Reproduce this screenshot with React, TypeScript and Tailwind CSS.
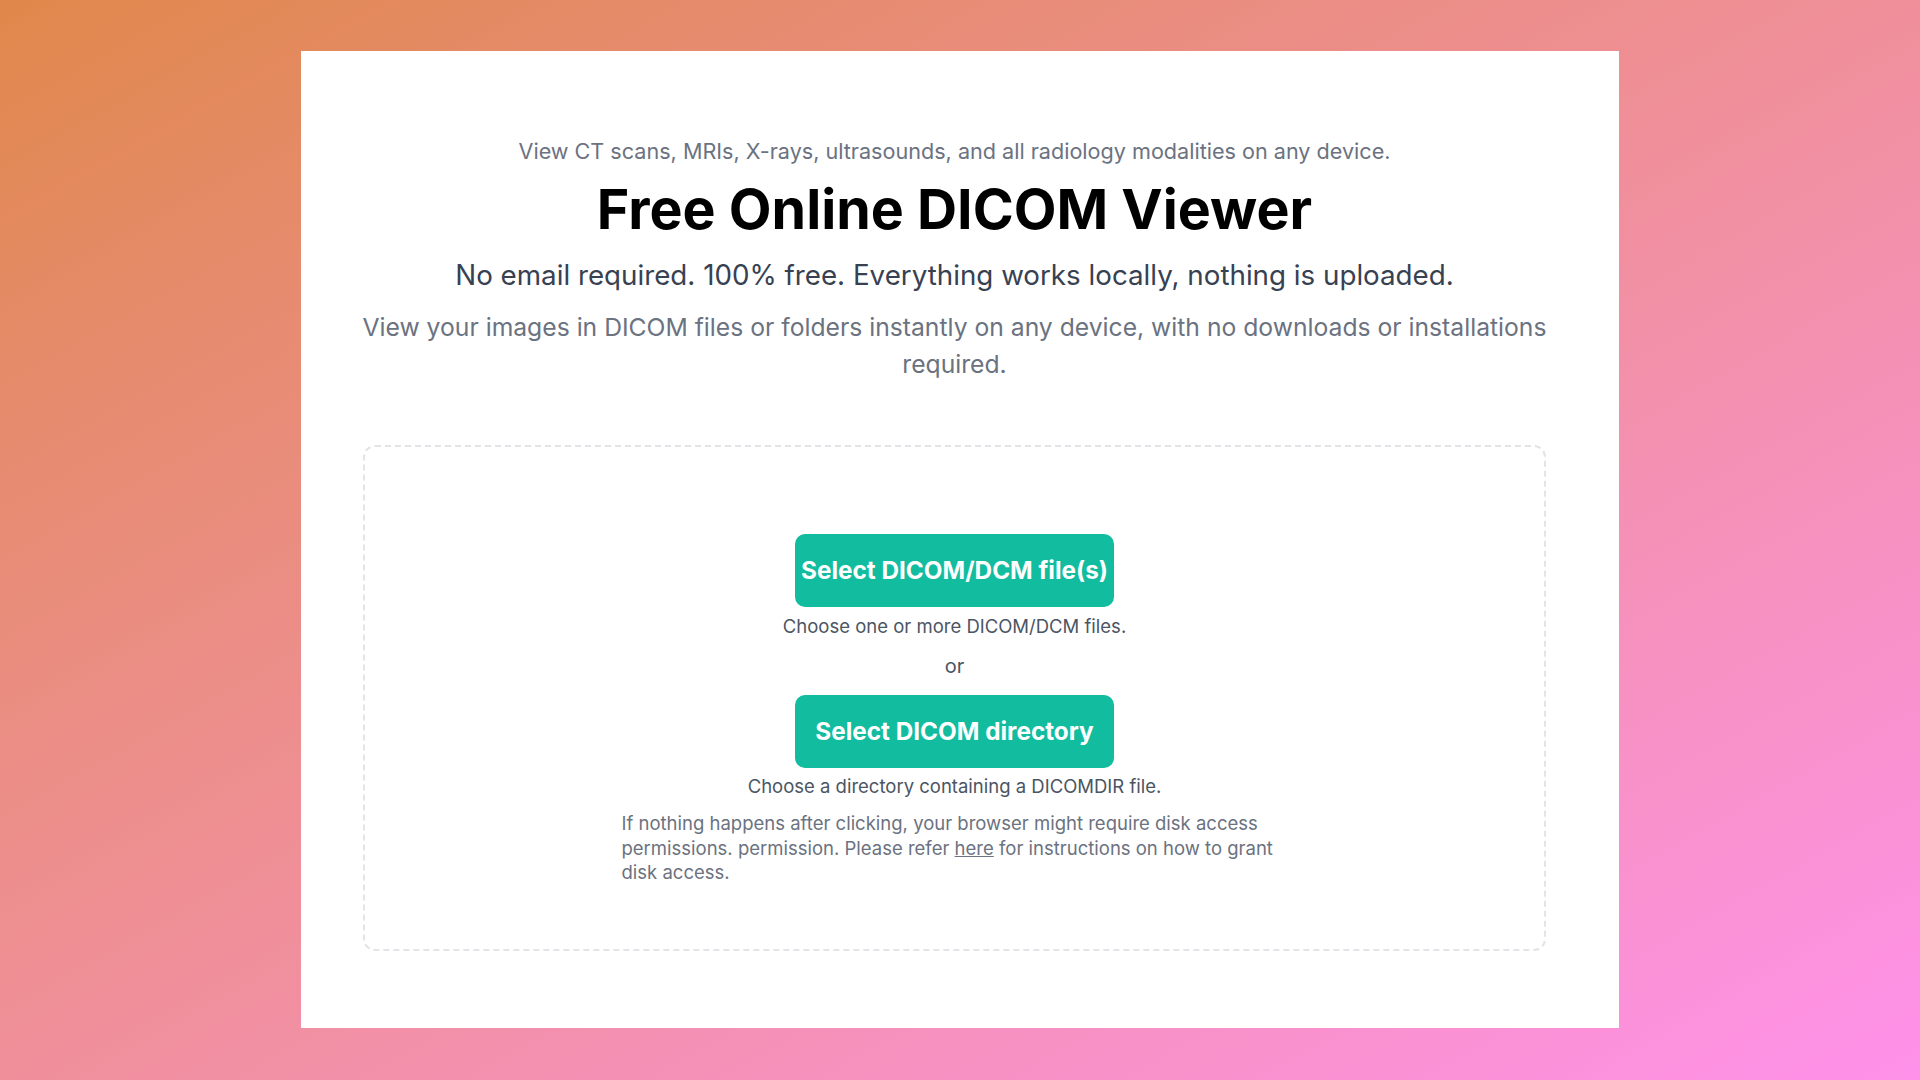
import React from "react";

export default function App() {
  return (
    <div
      className="w-[1920px] h-[1080px] overflow-hidden bg-linear-to-br from-[#e0884a] via-[#f08f9a] to-[#ff91ea] pt-[51px]"
      style={{ fontFamily: "Inter, 'Noto Sans', sans-serif" }}
    >
      <div className="ml-[301px] w-[1318px] h-[977px] bg-white pl-[62px] pr-[73px] pt-[86px] flex flex-col items-center">
        <p className="text-[21.6px] leading-[28px] text-[#6b7280] whitespace-nowrap">
          View CT scans, MRIs, X-rays, ultrasounds, and all radiology modalities on any device.
        </p>
        <h1 className="mt-[12px] text-[55.5px] leading-[64px] font-bold text-black whitespace-nowrap">
          Free Online DICOM Viewer
        </h1>
        <p className="mt-[16px] text-[27.75px] leading-[36px] text-[#374151] whitespace-nowrap">
          No email required. 100% free. Everything works locally, nothing is uploaded.
        </p>
        <p className="mt-[16px] w-[1210px] shrink-0 text-[24.7px] leading-[37px] text-[#6b7280] text-center">
          View your images in DICOM files or folders instantly on any device, with no downloads or installations required.
        </p>
        <div className="mt-[62px] w-full h-[506px] shrink-0 border-2 border-dashed border-[#e2e4e8] rounded-[12px] flex flex-col items-center pt-[87px]">
          <button className="w-[319px] h-[73px] rounded-[10px] bg-[#12bc9f] text-white text-[24.3px] font-bold">
            Select DICOM/DCM file(s)
          </button>
          <p className="mt-[7px] text-[18.5px] leading-[24px] text-[#4b5563]">
            Choose one or more DICOM/DCM files.
          </p>
          <p className="mt-[16px] text-[20px] leading-[24px] text-[#4b5563]">or</p>
          <button className="mt-[17px] w-[319px] h-[73px] rounded-[10px] bg-[#12bc9f] text-white text-[24.3px] font-bold">
            Select DICOM directory
          </button>
          <p className="mt-[6px] text-[18.5px] leading-[24px] text-[#4b5563]">
            Choose a directory containing a DICOMDIR file.
          </p>
          <p className="mt-[13px] w-[666px] text-[18.5px] leading-[24.5px] text-[#6b7280]">
            If nothing happens after clicking, your browser might require disk access permissions. permission. Please refer{" "}
            <a className="underline" href="#">here</a> for instructions on how to grant disk access.
          </p>
        </div>
      </div>
    </div>
  );
}
